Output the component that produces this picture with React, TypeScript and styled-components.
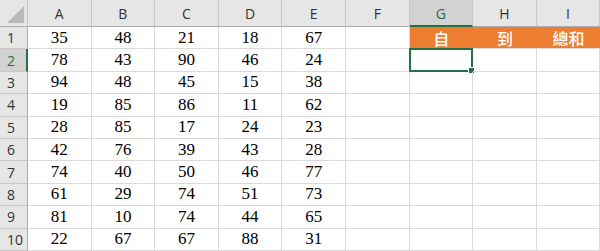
import React from 'react';
import styled, {createGlobalStyle} from "styled-components";

const GlobalStyle = createGlobalStyle`
    html, body {
        margin: 0;
        padding: 0;
        background: #fff;
        overflow: hidden;
    }
`

const columns = ["A", "B", "C", "D", "E", "F", "G", "H", "I"]

const data: number[][] = [
    [35, 48, 21, 18, 67],
    [78, 43, 90, 46, 24],
    [94, 48, 45, 15, 38],
    [19, 85, 86, 11, 62],
    [28, 85, 17, 24, 23],
    [42, 76, 39, 43, 28],
    [74, 40, 50, 46, 77],
    [61, 29, 74, 51, 73],
    [81, 10, 74, 44, 65],
    [22, 67, 67, 88, 31],
]

const headings: Record<string, string> = {G: "自", H: "到", I: "總和"}

const App = () => {
    return (
        <>
            <GlobalStyle/>
            <Sheet>
                <Corner>
                    <CornerTriangle/>
                </Corner>
                {columns.map(c => (
                    <ColHeader key={c} active={c === "G"}>{c}</ColHeader>
                ))}
                {data.map((row, r) => (
                    <React.Fragment key={r}>
                        <RowHeader active={r === 1}>{r + 1}</RowHeader>
                        {columns.map((c, i) => {
                            if (r === 0 && headings[c]) {
                                return <Heading key={c}>{headings[c]}</Heading>
                            }
                            if (r === 1 && c === "G") {
                                return (
                                    <Cell key={c}>
                                        <Selection>
                                            <Handle/>
                                        </Selection>
                                    </Cell>
                                )
                            }
                            return <Cell key={c}>{i < 5 ? row[i] : ""}</Cell>
                        })}
                    </React.Fragment>
                ))}
            </Sheet>
        </>
    );
};

export default App

const Sheet = styled.div`
    display: grid;
    grid-template-columns: 28px repeat(9, 63.6px);
    grid-template-rows: 27px repeat(10, 22.4px);
    width: 600px;
    height: 251px;
    overflow: hidden;
`

const Corner = styled.div`
    display: flex;
    align-items: flex-end;
    justify-content: flex-end;
    padding: 0 3px 3px 0;
    background: #e6e6e6;
    border-right: 1px solid #c8c8c8;
    border-bottom: 1px solid #ababab;
`

const CornerTriangle = styled.div`
    width: 0;
    height: 0;
    border-left: 17px solid transparent;
    border-bottom: 17px solid #b8b8b8;
`

type HeaderProps = {
    active?: boolean
}

const ColHeader = styled.div<HeaderProps>`
    display: flex;
    align-items: center;
    justify-content: center;
    background: ${props => props.active ? "#d2d2d2" : "#e6e6e6"};
    color: ${props => props.active ? "#217346" : "#333"};
    border-right: 1px solid #c8c8c8;
    border-bottom: ${props => props.active ? "2px solid #217346" : "1px solid #ababab"};
    font-family: "Open Sans", "Liberation Sans", sans-serif;
    font-size: 14px;
    padding-top: 1px;
`

const RowHeader = styled.div<HeaderProps>`
    display: flex;
    align-items: center;
    padding-left: 7px;
    background: ${props => props.active ? "#d2d2d2" : "#e6e6e6"};
    color: ${props => props.active ? "#217346" : "#333"};
    border-right: ${props => props.active ? "2px solid #217346" : "1px solid #ababab"};
    border-bottom: 1px solid #c8c8c8;
    font-family: "Open Sans", "Liberation Sans", sans-serif;
    font-size: 14px;
`

const Cell = styled.div`
    position: relative;
    display: flex;
    align-items: center;
    justify-content: center;
    border-right: 1px solid #dadada;
    border-bottom: 1px solid #dadada;
    font-family: "Liberation Serif", serif;
    font-size: 17px;
    color: #000;
`

const Heading = styled.div`
    display: flex;
    align-items: center;
    justify-content: center;
    background: #ed7d31;
    color: #fff;
    border-bottom: 1px solid #dadada;
    font-family: "Noto Sans CJK TC", sans-serif;
    font-size: 16px;
    font-weight: 500;
`

const Selection = styled.div`
    position: absolute;
    inset: -1px;
    border: 2px solid #217346;
`

const Handle = styled.div`
    position: absolute;
    right: -4px;
    bottom: -4px;
    width: 5px;
    height: 5px;
    background: #217346;
    border: 1px solid #fff;
`
